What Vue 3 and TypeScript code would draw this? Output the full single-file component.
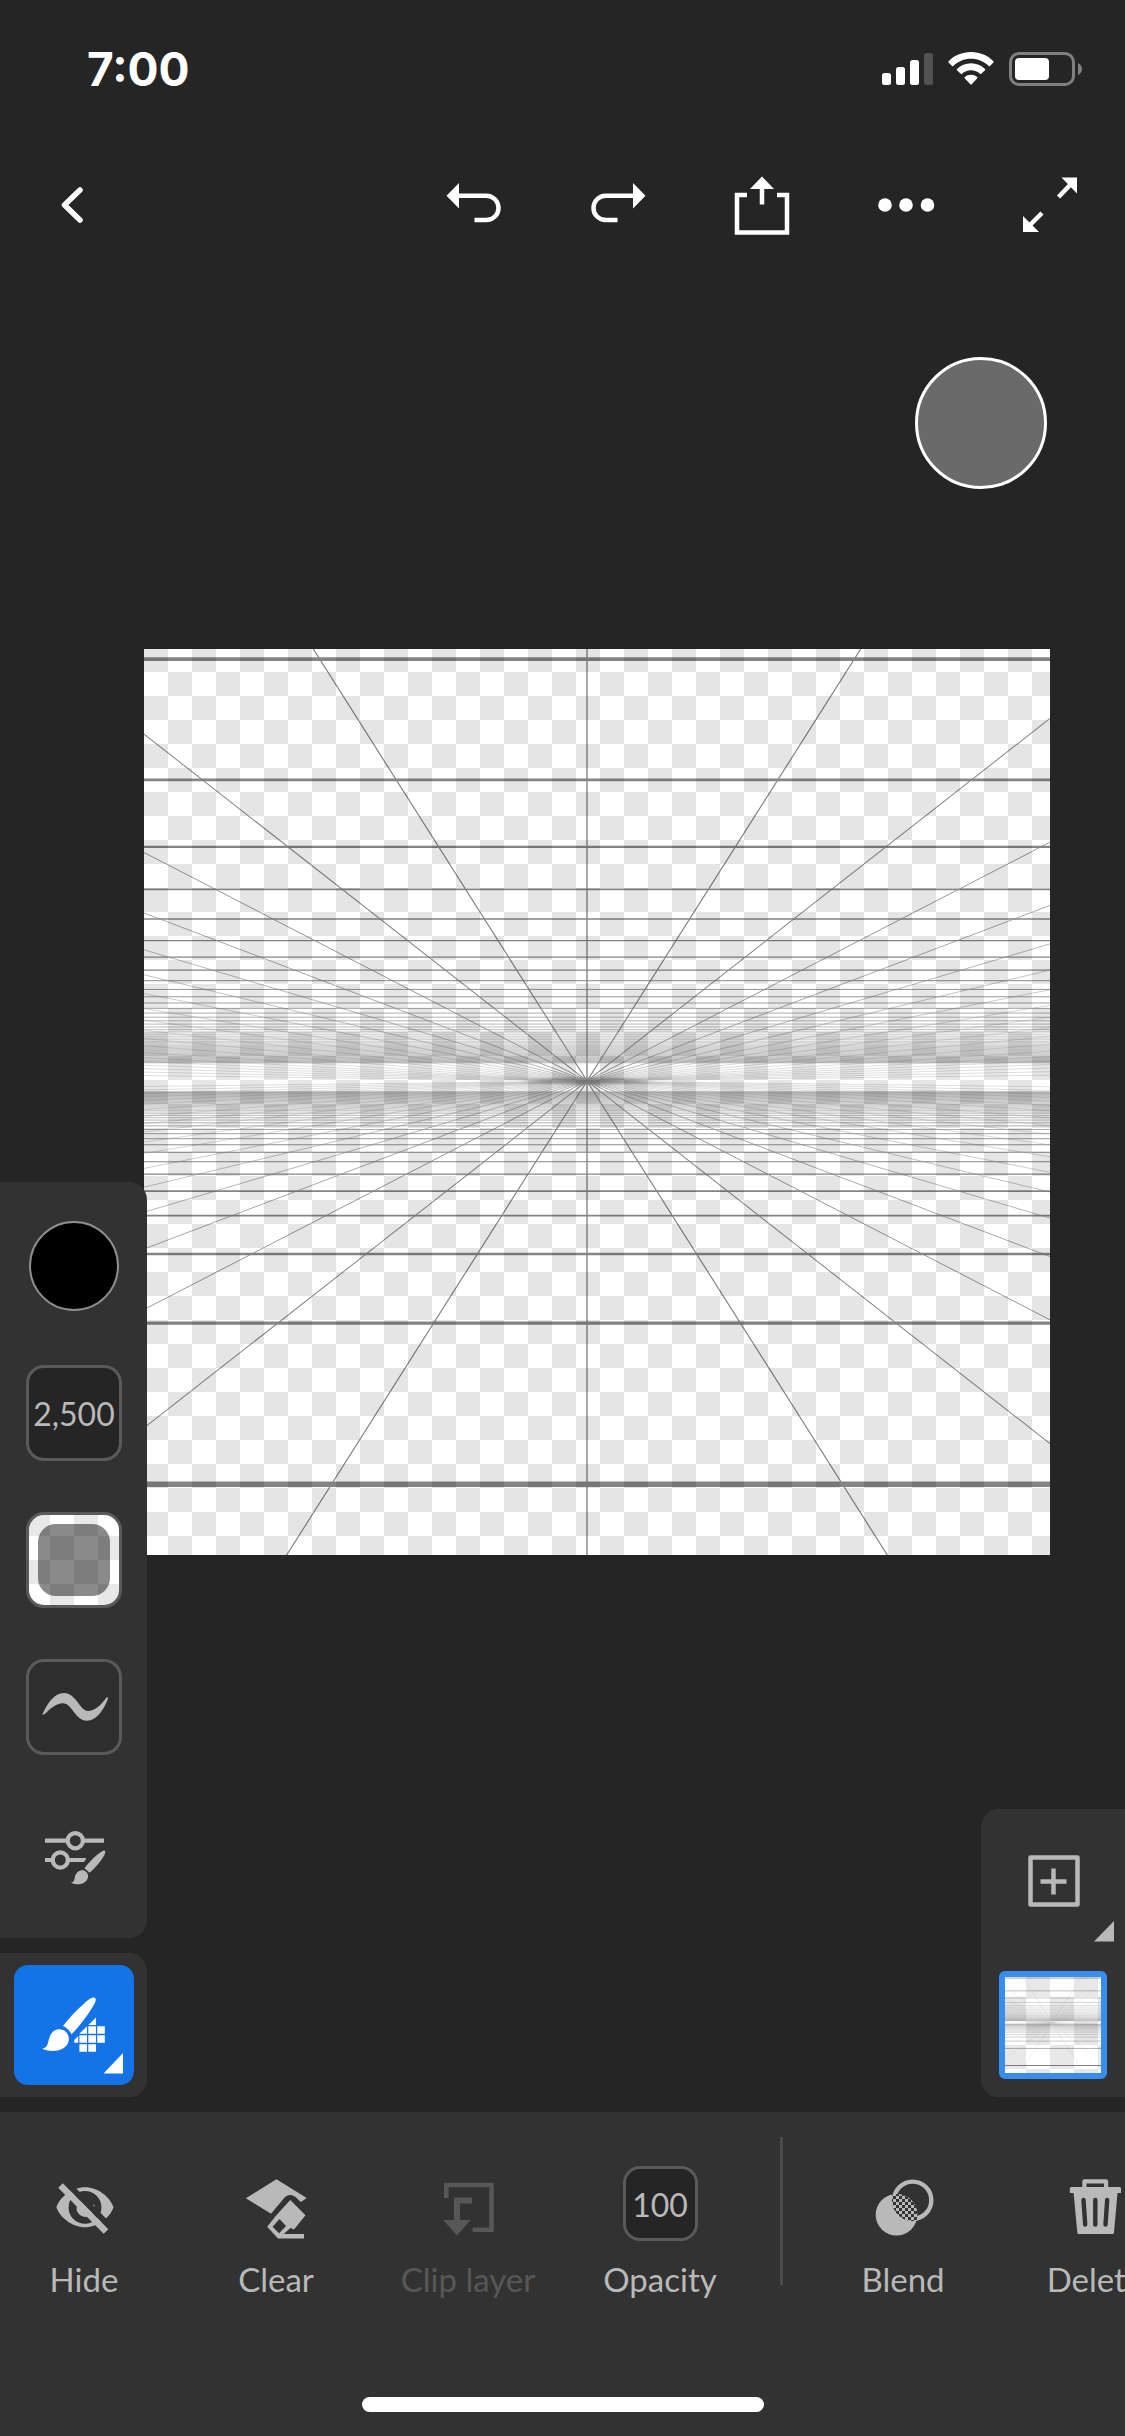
<script setup lang="ts">
interface GridLine {
  d: string
  width: number
}

const SIZE = 906
const VX = 443
const VY = 432

const horizontals: GridLine[] = []
for (let k = 0; k < 57; k++) {
  const up = 1 / (0.00237 + 0.00095 * k)
  const down = 1 / (0.00248 + 0.00165 * k)
  horizontals.push({ d: `M0 ${(VY - up).toFixed(2)}H${SIZE}`, width: 0.009 * up + 0.07 })
  horizontals.push({ d: `M0 ${(VY + down).toFixed(2)}H${SIZE}`, width: 0.0135 * down + 0.05 })
}

const slopes = [0.6335, 1.277, 1.939, 2.637, 3.377, 4.17, 5.07, 6.12, 7.26, 8.7, 10.4, 12.6, 15.6, 19, 23, 28, 36, 50, 80]
const rays: GridLine[] = slopes.flatMap((slope, i) => {
  const width = Math.max(0.28, 1.2 * Math.pow(0.84, i))
  return [-1, 1].map((side) => {
    const reach = side < 0 ? VX : SIZE - VX
    const dy = Math.min(reach / slope, 480)
    const x = VX + side * dy * slope
    return {
      d: `M${x.toFixed(1)} ${(VY - dy).toFixed(1)}L${VX} ${VY}L${x.toFixed(1)} ${(VY + dy).toFixed(1)}`,
      width,
    }
  })
})

const gridLines: GridLine[] = [...horizontals, ...rays, { d: `M${VX} 0V${SIZE}`, width: 1.4 }]
const thumbLines: GridLine[] = [...horizontals.map(({ d, width }) => ({ d, width: width * 1.8 })), ...rays]
</script>

<template>
  <div class="app">
    <div class="status">
      <time class="clock">7:00</time>
      <div class="indicators">
        <svg width="51" height="34" viewBox="0 0 51 34" aria-hidden="true">
          <rect x="0" y="21" width="9" height="12" rx="2.500" fill="#fff" />
          <rect x="14" y="15" width="9" height="18" rx="2.500" fill="#fff" />
          <rect x="28" y="8" width="9" height="25" rx="2.500" fill="#fff" />
          <rect x="42" y="1" width="9" height="32" rx="2.500" fill="#525252" />
        </svg>
        <svg width="46" height="34" viewBox="0 0 46 34" aria-hidden="true" fill="#fff">
          <path d="M23 0C14 0 6 3.500 .6 9.200Q0 10 .6 10.600L4 14Q4.600 14.500 5.300 14C10 9.500 16 6.800 23 6.800S36 9.500 40.700 14Q41.400 14.500 42 14L45.400 10.600Q46 10 45.400 9.200C40 3.500 32 0 23 0Z" />
          <path d="M23 11.300C17.500 11.300 12.700 13.400 9 16.900Q8.400 17.600 9 18.200L12.700 21.800Q13.300 22.400 14 21.800C16.400 19.500 19.500 18.200 23 18.200S29.600 19.500 32 21.800Q32.700 22.400 33.300 21.800L37 18.200Q37.600 17.600 37 16.900C33.300 13.400 28.500 11.300 23 11.300Z" />
          <path d="M23 22.800C20.600 22.800 18.500 23.600 16.800 25Q16.100 25.700 16.700 26.300L22.300 32.300Q23 33 23.700 32.300L29.300 26.300Q29.900 25.700 29.200 25C27.500 23.600 25.400 22.800 23 22.800Z" />
        </svg>
        <svg width="74" height="34" viewBox="0 0 74 34" aria-hidden="true">
          <rect x="1.500" y="1.500" width="63" height="31" rx="8.500" fill="none" stroke="#808080" stroke-width="3" />
          <rect x="6" y="6" width="34" height="22" rx="4" fill="#fff" />
          <path d="M69 11Q73 13 73 17T69 23Z" fill="#808080" />
        </svg>
      </div>
    </div>

    <header class="toolbar">
      <button class="tool" aria-label="Back">
        <svg viewBox="0 0 96 96"><path d="M56 33L40.500 48L56 63" fill="none" stroke="#fff" stroke-width="5.500" stroke-linecap="round" stroke-linejoin="round" /></svg>
      </button>
      <div class="actions">
        <button class="tool" aria-label="Undo">
          <svg viewBox="0 0 96 96">
            <path class="line" d="M31 38.700H60.300a12.200 12.200 0 0 1 0 24.400H48.500" />
            <path class="solid" d="M20.500 38.700L33 26V51.400Z" />
          </svg>
        </button>
        <button class="tool" aria-label="Redo">
          <svg viewBox="0 0 96 96">
            <path class="line" d="M65 38.700H35.700a12.200 12.200 0 0 0 0 24.400H47.500" />
            <path class="solid" d="M75.500 38.700L63 26V51.400Z" />
          </svg>
        </button>
        <button class="tool" aria-label="Share">
          <svg viewBox="0 0 96 96">
            <path class="line" d="M33 38H23V75.500H73V38H63M48 29V47.500" />
            <path class="solid" d="M48 19.500L60 32H36Z" />
          </svg>
        </button>
        <button class="tool" aria-label="More">
          <svg viewBox="0 0 96 96">
            <circle class="solid" cx="27" cy="48" r="6.800" />
            <circle class="solid" cx="48" cy="48" r="6.800" />
            <circle class="solid" cx="69.500" cy="48" r="6.800" />
          </svg>
        </button>
        <button class="tool" aria-label="Full screen">
          <svg viewBox="0 0 96 96">
            <path class="line" d="M56.500 40L69 27M40 56L27 69" />
            <path class="solid" d="M75 20.500V36.500L59.500 20.500ZM21 75V59L37 75Z" />
          </svg>
        </button>
      </div>
    </header>

    <main class="stage">
      <div class="artboard">
        <svg viewBox="0 0 906 906" role="img" aria-label="Perspective grid">
          <defs>
            <radialGradient id="core">
              <stop offset="0" stop-color="#000" />
              <stop offset="0.350" stop-color="#000" stop-opacity="0.700" />
              <stop offset="1" stop-color="#000" stop-opacity="0" />
            </radialGradient>
          </defs>
          <g opacity="0.480">
            <path v-for="(line, i) in gridLines" :key="i" :d="line.d" fill="none" stroke="#000" :stroke-width="line.width" />
            <ellipse :cx="VX" :cy="VY" rx="70" ry="5" fill="url(#core)" />
            <ellipse :cx="VX" :cy="VY" rx="26" ry="2.500" fill="url(#core)" />
          </g>
        </svg>
      </div>

      <button class="touch" aria-label="Touch shortcut"></button>

      <aside class="dock left">
        <div class="panel settings">
          <button class="slot color" aria-label="Color"></button>
          <button class="slot size" aria-label="Brush size">2,500</button>
          <button class="slot flow" aria-label="Flow"><span class="flow-fill"></span></button>
          <button class="slot smooth" aria-label="Smoothing">
            <svg width="90" height="90" viewBox="3 3 90 90">
              <path class="grey" d="M16.500 55C22 43 29 34 38 34C50 34 54 52 62 52C69 52 76 45 80.500 38.500C81.500 37.500 82.300 38.500 81.700 40.500C77 52 70 61.700 61 61.700C49 61.700 46 44.300 37 44.300C30 44.300 24 50 19 54.800C17.500 56 16 56.200 16.500 55Z" />
            </svg>
          </button>
          <button class="slot" aria-label="Brush settings">
            <svg width="96" height="96" viewBox="0 0 96 96">
              <path d="M19 34.700H41M57.500 34.700H78M19 54H26.500M42.500 54H60" stroke="#b9b9b9" stroke-width="4.200" fill="none" />
              <circle cx="49.300" cy="34.700" r="7.600" fill="none" stroke="#b9b9b9" stroke-width="4.200" />
              <circle cx="34.300" cy="54" r="7.600" fill="none" stroke="#b9b9b9" stroke-width="4.200" />
              <path d="M56 59L62 50L70 44L70 54Z" fill="#323232" />
              <path class="grey" d="M78.500 44.500C80.500 46 78 50 76 53C72.500 58 68 63 63.500 66.800L58.500 62.300C62 57.500 67 52 71.500 48.500C74 46.500 77 43.800 78.500 44.500Z" />
              <path class="grey" d="M57 64.300C60.500 65 62.500 68 62 71C61.500 75.500 57 78.300 52 78.300C49 78.300 46.500 77.500 45 76.500C48.500 76 48.300 73.500 49 70.500C50 66.500 53.500 64 57 64.300Z" />
            </svg>
          </button>
        </div>
        <div class="panel brush">
          <button class="active-brush" aria-label="Pixel brush">
            <svg viewBox="0 0 120 120" fill="#fff">
              <path d="M80.500 32.700C83.500 34 80.500 39 78 43C72.500 52 65 61.500 57.700 69.200C55.500 65.500 52.800 62.500 49 61C55.500 52.500 63 44.500 70.500 38.200C74 35 78 32 80.500 32.700Z" />
              <path d="M45.500 64.300C51.500 64.500 55.500 69.500 54.700 75.500C53.800 82.500 46.500 85.900 39 85.900C34 85.900 30 85 28.300 83.600C34 82.500 33.500 78.500 35.300 73C37 67.500 40.500 64.200 45.500 64.300Z" />
              <path d="M82 52.500V60H74.300ZM73 61.300V68.800H65.300ZM74.300 61.300H82V68.800H74.300ZM83.200 61.300H90.800V68.800H83.200ZM64.200 71V77.800H60.300V75ZM65.400 70.200H73V77.800H65.400ZM74.300 70.200H82V77.800H74.300ZM83.200 70.200H90.800V77.800H83.200ZM65.400 79.200H73V86.800H65.400ZM74.300 79.200H82V86.800H74.300Z" />
              <path d="M89.500 108.500L109 88V108.500Z" />
            </svg>
          </button>
        </div>
      </aside>

      <aside class="dock right">
        <div class="panel layers">
          <button class="add" aria-label="Add layer">
            <svg viewBox="0 0 144 144">
              <path d="M49.500 48.500H96.500V95.500H49.500ZM72.500 59.500V85.500M59.500 72.500H85.500" fill="none" stroke="#b9b9b9" stroke-width="4.500" stroke-linejoin="round" />
              <path class="grey" d="M113 132.500L133 112V132.500Z" />
            </svg>
          </button>
          <button class="layer" aria-label="Layer 1">
            <svg viewBox="0 0 906 906">
              <g opacity="0.480">
                <path v-for="(line, i) in thumbLines" :key="i" :d="line.d" fill="none" stroke="#000" :stroke-width="line.width" />
              </g>
            </svg>
          </button>
        </div>
      </aside>
    </main>

    <footer class="bottom">
      <nav class="commands" aria-label="Layer actions">
        <button class="command">
          <svg width="75" height="75" viewBox="0 0 75 75">
            <mask id="eye-mask">
              <rect width="75" height="75" fill="#fff" />
              <path d="M18 15.500L67 64.500" stroke="#000" stroke-width="6" />
            </mask>
            <g mask="url(#eye-mask)">
              <path class="grey" fill-rule="evenodd" d="M9.400 41.300C13 31 25 21.300 38 21.300S63 31 66.500 41.300C63 51.500 51 61.300 38 61.300S13 51.500 9.400 41.300ZM38 25A16.400 16.400 0 1 0 38 57.800A16.400 16.400 0 1 0 38 25Z" />
              <path class="grey" d="M38 32.500Q36 39 41.500 40.500Q46 41 47 38A9.200 9.200 0 1 1 38 32.500Z" />
            </g>
            <path d="M13.500 19.500L59 65.500" stroke="#b9b9b9" stroke-width="6.500" />
          </svg>
          <span>Hide</span>
        </button>
        <button class="command">
          <svg width="75" height="75" viewBox="0 0 75 75">
            <path class="grey" d="M37.400 13.300L67.700 32L61.900 36L56.500 31Q51.200 27 46 31L32 47.700L6.800 32.300Z" />
            <path class="grey" fill-rule="evenodd" d="M51.200 34L66.500 49.300L55 63.500L51.500 62L44.700 68H65V72.400H39L28.200 60.700L36.700 50ZM40.500 53L33.600 60.700L40.100 67.300L47 60Z" />
          </svg>
          <span>Clear</span>
        </button>
        <button class="command" disabled>
          <svg width="75" height="75" viewBox="0 0 75 75">
            <path d="M15.300 32V19H60.500V63.800H41.500" fill="none" stroke="#575757" stroke-width="4.600" />
            <path d="M41 34.500H26V55" fill="none" stroke="#575757" stroke-width="6" />
            <path d="M12.300 54H39.500L26 69.500Z" fill="#575757" />
          </svg>
          <span>Clip layer</span>
        </button>
        <button class="command">
          <span class="value">100</span>
          <span>Opacity</span>
        </button>
        <div class="divider"></div>
        <button class="command">
          <svg width="75" height="75" viewBox="0 0 75 75">
            <defs>
              <pattern id="dots" width="6" height="6" patternUnits="userSpaceOnUse">
                <rect width="6" height="6" fill="#323232" />
                <path d="M0 0H3V3H0ZM3 3H6V6H3Z" fill="#b9b9b9" />
              </pattern>
              <clipPath id="fill-clip"><circle cx="30.500" cy="48.800" r="20.800" /></clipPath>
            </defs>
            <circle cx="46.700" cy="34.200" r="18.600" fill="none" stroke="#b9b9b9" stroke-width="4.400" />
            <circle class="grey" cx="30.500" cy="48.800" r="20.800" />
            <circle cx="46.700" cy="34.200" r="20.800" fill="url(#dots)" clip-path="url(#fill-clip)" />
          </svg>
          <span>Blend</span>
        </button>
        <button class="command">
          <svg width="75" height="75" viewBox="0 0 75 75">
            <path class="grey" fill-rule="evenodd" d="M26.500 13.300H48Q50.200 13.300 50.200 15.500V21H61.500Q63 21 63 22.500V27H59.500L56 66.500Q55.800 68 54.500 68H20.700Q19.500 68 19.300 66.500L15.600 27H11.800V22.500Q11.800 21 13.500 21H24.300V15.500Q24.300 13.300 26.500 13.300ZM28.500 17.500V21H46V17.500Z" />
            <path d="M25.500 34L27.200 58.500M37.300 34V58.500M49.200 34L47.500 58.500" stroke="#323232" stroke-width="4.400" stroke-linecap="round" />
          </svg>
          <span>Delete</span>
        </button>
      </nav>
      <div class="home"></div>
    </footer>
  </div>
</template>

<style>
body {
  background: #252525;
}
</style>

<style scoped>
.app {
  display: flex;
  flex-direction: column;
  min-height: 100vh;
  background: #252525;
  color: #b9b9b9;
  font-family: Lato, "Noto Sans", sans-serif;
  overflow: hidden;
}

button {
  box-sizing: border-box;
  margin: 0;
  padding: 0;
  border: 0;
  background: none;
  color: inherit;
  font: inherit;
}

svg {
  display: block;
  flex: none;
}

.status {
  display: flex;
  justify-content: space-between;
  box-sizing: border-box;
  height: 141px;
  padding: 44px 42px 0 87px;
}

.clock {
  color: #fff;
  font: 700 46px/50px Inter, sans-serif;
}

.indicators {
  display: flex;
  gap: 15px;
  margin-top: 8px;
}

.toolbar {
  display: flex;
  align-items: center;
  justify-content: space-between;
  height: 128px;
  padding: 0 27px 0 24px;
}

.actions {
  display: flex;
  gap: 48px;
}

.tool {
  width: 96px;
  height: 96px;
}

.line {
  fill: none;
  stroke: #fff;
  stroke-width: 4.5px;
}

.solid {
  fill: #fff;
}

.grey {
  fill: #b9b9b9;
}

.stage {
  position: relative;
  flex: 1;
  padding: 380px 75px 15px 144px;
}

.artboard {
  aspect-ratio: 1;
  overflow: hidden;
  background: repeating-conic-gradient(#fff 0 25%, #e5e5e5 0 50%) 0 -1px / 48px 48px;
}

.touch {
  position: absolute;
  top: 88px;
  right: 78px;
  width: 132px;
  height: 132px;
  border: 3px solid #fff;
  border-radius: 50%;
  background: #6a6a6a;
}

.dock {
  position: absolute;
  bottom: 15px;
  display: flex;
  flex-direction: column;
  gap: 15px;
}

.left {
  left: 0;
}

.right {
  right: 0;
}

.panel {
  display: flex;
  flex-direction: column;
  background: #323232;
}

.left .panel {
  border-radius: 0 18px 18px 0;
}

.settings {
  gap: 51px;
  padding: 36px 25px 36px 26px;
}

.slot {
  display: flex;
  align-items: center;
  justify-content: center;
  width: 96px;
  height: 96px;
}

.color {
  width: 90px;
  height: 90px;
  margin: 3px;
  border: 2px solid #8e8e8e;
  border-radius: 50%;
  background: #000;
}

.size,
.flow,
.smooth {
  border: 3px solid #5a5a5a;
  border-radius: 18px;
}

.size {
  background: #252525;
  font-size: 32px;
}

.flow {
  background: repeating-conic-gradient(#fff 0 25%, #e8e8e8 0 50%) -3px -3px / 48px 48px;
}

.flow-fill {
  width: 72px;
  height: 72px;
  border-radius: 18px;
  background: rgba(0, 0, 0, 0.46);
}

.smooth {
  background: #2e2e2e;
}

.brush {
  padding: 12px 13px 12px 14px;
}

.active-brush {
  width: 120px;
  height: 120px;
  border-radius: 14px;
  background: #1473e6;
}

.layers {
  align-items: center;
  gap: 18px;
  padding-bottom: 18px;
  border-radius: 18px 0 0 18px;
}

.add {
  width: 144px;
  height: 144px;
}

.layer {
  width: 108px;
  height: 108px;
  border: 6px solid #378ef0;
  border-radius: 6px;
  background: repeating-conic-gradient(#e8e8e8 0 25%, #fff 0 50%) -3px -4px / 48px 48px;
}

.bottom {
  display: flex;
  flex-direction: column;
  align-items: center;
  justify-content: space-between;
  box-sizing: border-box;
  height: 324px;
  padding: 25px 0 24px;
  background: #323232;
}

.commands {
  display: flex;
  gap: 24px;
  width: 100%;
  overflow: hidden;
}

.command {
  display: flex;
  flex: none;
  flex-direction: column;
  align-items: center;
  gap: 18px;
  width: 168px;
  padding-top: 29px;
  font-size: 33px;
  line-height: 40px;
}

.command:disabled {
  color: #575757;
}

.value {
  box-sizing: border-box;
  width: 75px;
  height: 75px;
  border: 3px solid #5a5a5a;
  border-radius: 17px;
  background: #252525;
  font-size: 32px;
  line-height: 72px;
}

.divider {
  flex: none;
  width: 3px;
  height: 148px;
  margin: 0 12px;
  background: #4b4b4b;
}

.home {
  width: 402px;
  height: 15px;
  border-radius: 8px;
  background: #fff;
}
</style>
